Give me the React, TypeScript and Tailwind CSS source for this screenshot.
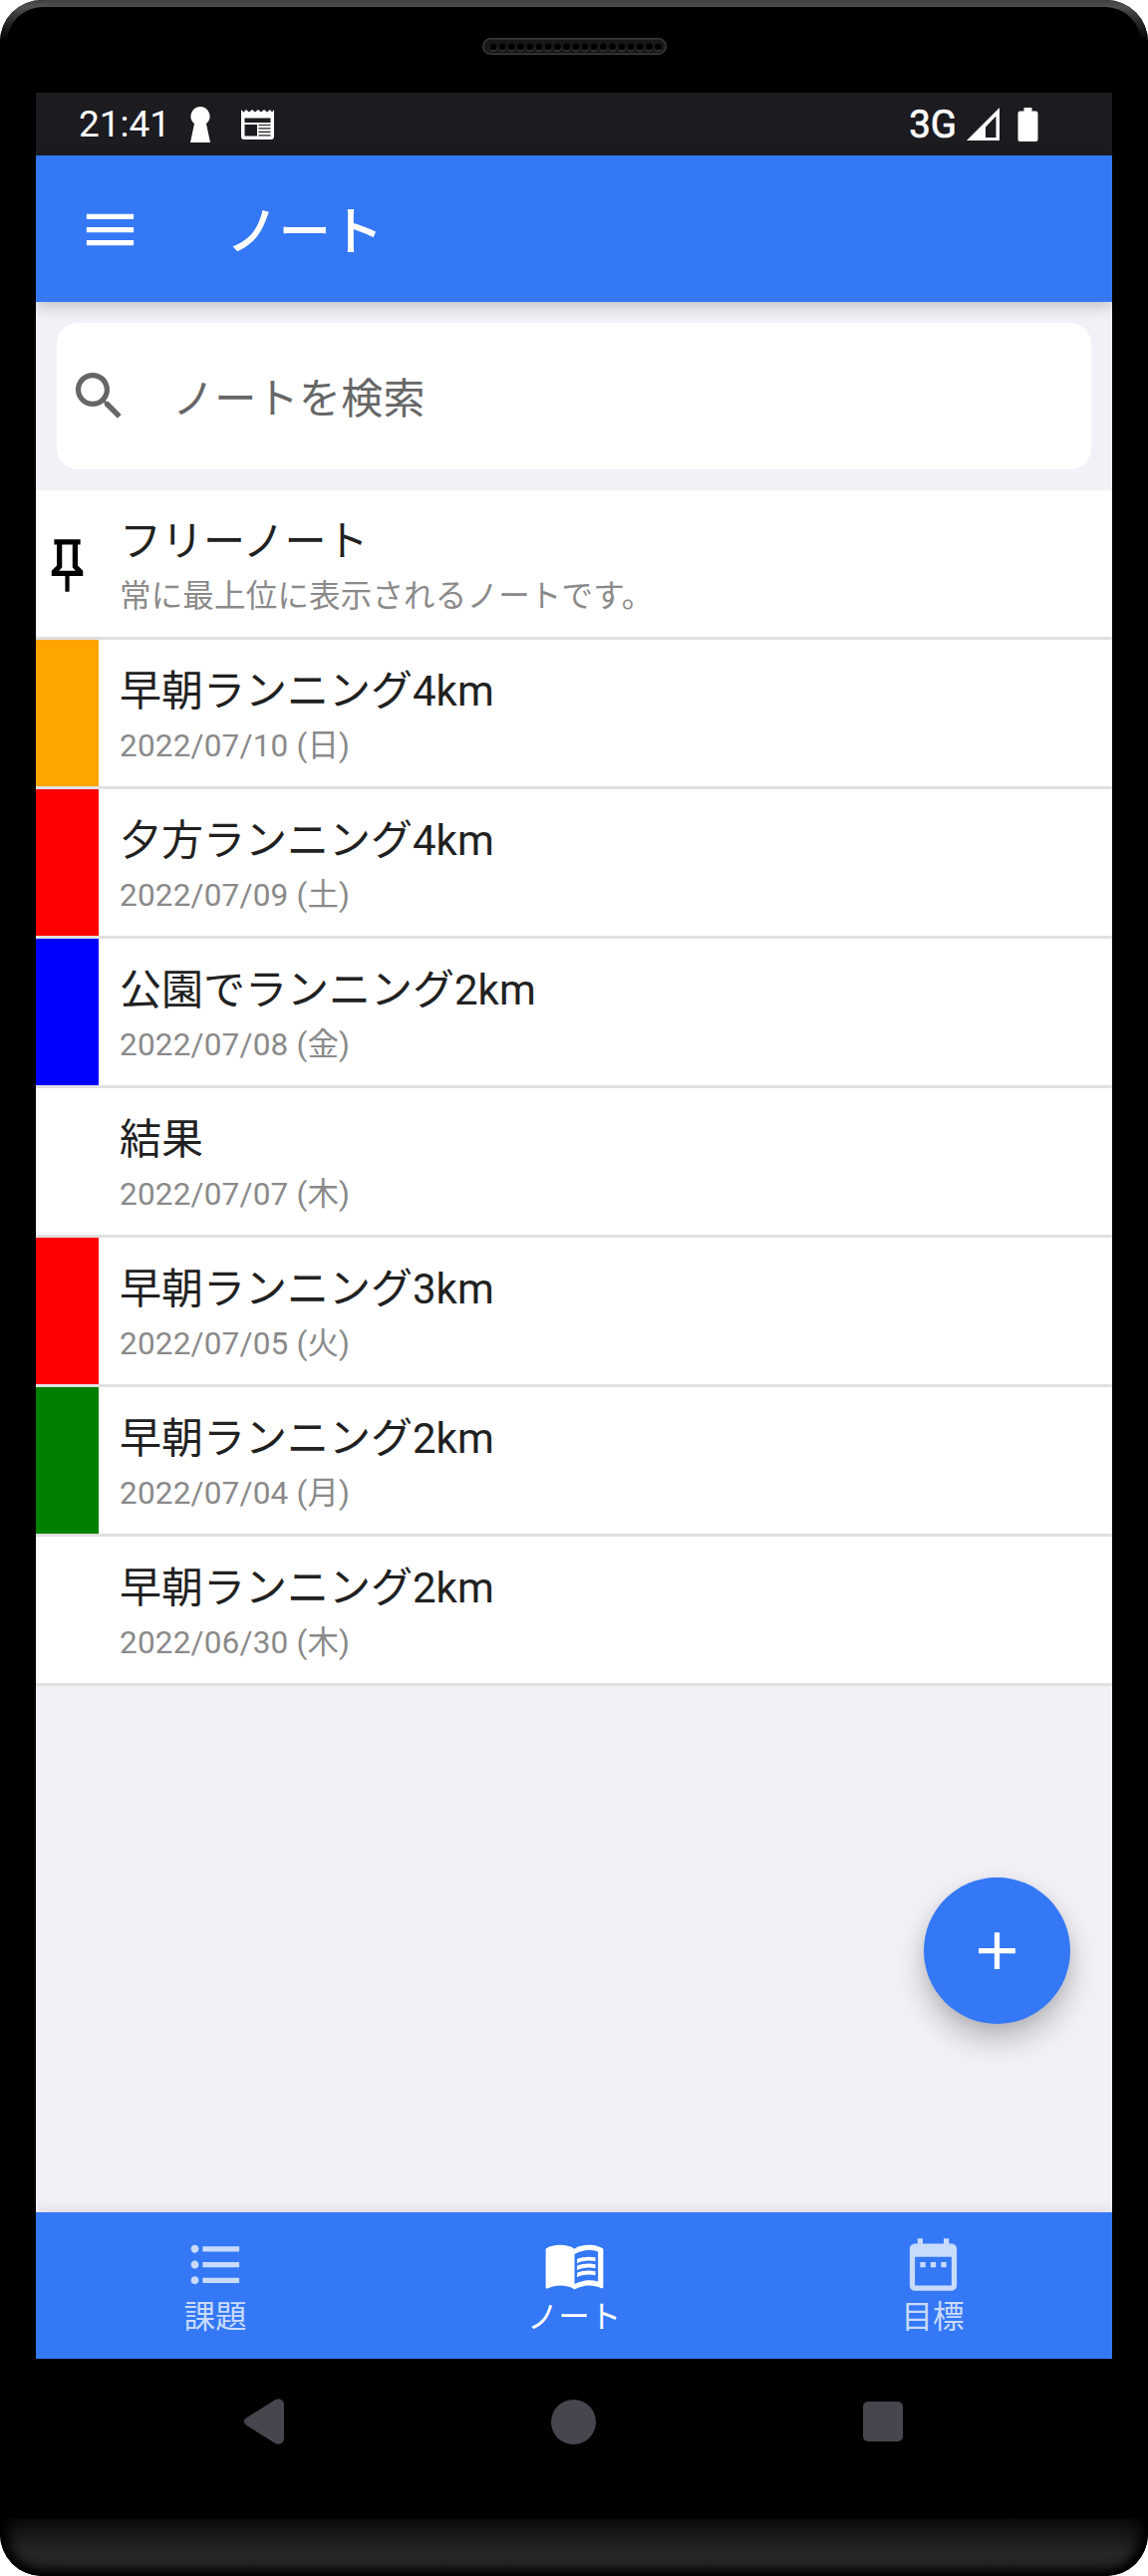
import React from "react";
import { MdMenu, MdSearch, MdAdd, MdMenuBook, MdDateRange, MdFormatListBulleted } from "react-icons/md";

const notes = [
  { title: "早朝ランニング4km", date: "2022/07/10 (日)", color: "bg-[#ffa500]" },
  { title: "夕方ランニング4km", date: "2022/07/09 (土)", color: "bg-[#ff0000]" },
  { title: "公園でランニング2km", date: "2022/07/08 (金)", color: "bg-[#0000ff]" },
  { title: "結果", date: "2022/07/07 (木)", color: "bg-white" },
  { title: "早朝ランニング3km", date: "2022/07/05 (火)", color: "bg-[#ff0000]" },
  { title: "早朝ランニング2km", date: "2022/07/04 (月)", color: "bg-[#008000]" },
  { title: "早朝ランニング2km", date: "2022/06/30 (木)", color: "bg-white" },
];

function Row({ title, sub, children }: { title: string; sub: string; children: React.ReactNode }) {
  return (
    <li className="flex h-[150px] border-b-[3px] border-[#e0e0e0] bg-white">
      <div className="flex w-[63px] shrink-0">{children}</div>
      <div className="ml-[21px] flex flex-col pt-[22px]">
        <span className="h-[61px] text-[42px] leading-[60px] text-[#212121]">{title}</span>
        <span className="h-[48px] text-[31.5px] leading-[48px] tracking-[0.18px] text-[#8a8a8a]">{sub}</span>
      </div>
    </li>
  );
}

function PinIcon() {
  return (
    <svg viewBox="0 0 24 24" className="size-[63px]">
      <path d="M16,12V4H17V2H7V4H8V12L6,14V16H11.2V22H12.8V16H18V14L16,12M8.8,14L10,12.8V4H14V12.8L15.2,14H8.8Z" />
    </svg>
  );
}

function Speaker() {
  return (
    <svg viewBox="0 0 185 17" className="h-[17px] w-[185px]">
      <rect x="0.8" y="0.8" width="183.4" height="15.4" rx="7.7" fill="#181818" stroke="#3a3a3a" strokeWidth="1.6" />
      {Array.from({ length: 19 }, (_, i) => (
        <g key={i}>
          <circle cx={11 + i * 9.2} cy="9.8" r="3.7" fill="#4a4a4a" />
          <circle cx={11 + i * 9.2} cy="9" r="3.6" fill="#000" />
        </g>
      ))}
    </svg>
  );
}

function StatusBar() {
  return (
    <div className="flex h-[63px] items-center justify-between bg-[#1b1b20] pr-[74px] pl-[43px] text-white">
      <div className="flex items-center">
        <span className="w-[98px] text-[37px] leading-[63px]">21:41</span>
        <svg viewBox="0 0 20 36" className="ml-[14px] h-[36px] w-[20px]" fill="currentColor">
          <path d="M10 0a9.6 9.6 0 0 1 6 17l4 19H0l4-19A9.6 9.6 0 0 1 10 0z" />
        </svg>
        <svg viewBox="0 0 33 30" className="ml-[31px] h-[30px] w-[33px]" fill="currentColor">
          <path fillRule="evenodd" d="M0 0L2.500 2.500L5 0L8 2.500L11 0L14 2.500L17 0L20 2.500L23 0L26 2.500L29 0L31 2.500L33 0V27Q33 30 30 30H3Q0 30 0 27zM3.500 8.500V13H29.500V8.500zM3.500 15V26.500H16V15zM17.500 15V16H29.500V15zM17.500 18.300V19.500H29.500V18.300zM17.500 21.800V23H29.500V21.800zM17.500 25.300V26.500H29.500V25.300z" />
        </svg>
      </div>
      <div className="flex items-center">
        <span className="text-[38.5px] leading-[63px] [-webkit-text-stroke:0.7px_white]">3G</span>
        <svg viewBox="0 0 33 34" className="ml-[10px] h-[34px] w-[33px]" fill="currentColor">
          <path fillRule="evenodd" d="M33 0v33H0zM29.500 8.500L19 19.500V30H29.500z" />
        </svg>
        <svg viewBox="0 0 20 34" className="ml-[18px] h-[34px] w-[21px]" fill="currentColor">
          <path d="M6 0h8v3.500h4q2 0 2 2V32q0 2-2 2H2q-2 0-2-2V5.500q0-2 2-2h4z" />
        </svg>
      </div>
    </div>
  );
}

function Tab({ icon, label, active }: { icon: React.ReactNode; label: string; active?: boolean }) {
  return (
    <div className={active ? "flex flex-1 flex-col items-center pt-[21px] text-white" : "flex flex-1 flex-col items-center pt-[21px] text-[#c9dbfd]"}>
      {icon}
      <span className="pt-[2px] text-[31.5px] leading-[40px]">{label}</span>
    </div>
  );
}

export default function App() {
  return (
    <div lang="ja" className="h-[2585px] w-[1152px] bg-white font-[Roboto,'Noto_Sans_CJK_JP',sans-serif]">
      <div className="flex h-full flex-col overflow-hidden rounded-[42px] bg-black">
        <div className="flex h-[93px] shrink-0 flex-col bg-[linear-gradient(to_bottom,#404040_0px,#505050_7px,#3c3c3c_14px,#000_40px)] px-[7px] pt-[7px]">
          <div className="flex flex-1 justify-center rounded-t-[36px] bg-black pt-[31px]">
            <Speaker />
          </div>
        </div>

        <div className="relative mx-[36px] flex h-[2274px] shrink-0 flex-col overflow-hidden bg-[#f2f1f7]">
          <StatusBar />
          <header className="z-10 flex h-[147px] shrink-0 items-center bg-[#3478f6] pl-[43px] text-white shadow-[0_4px_14px_rgba(0,0,0,0.22)]">
            <MdMenu className="mt-[1px] size-[63px]" />
            <h1 className="ml-[85px] pt-[7px] text-[52.5px] leading-[72px] font-medium">ノート</h1>
          </header>

          <div className="m-[21px] flex h-[147px] shrink-0 items-center rounded-[21px] bg-white pl-[11px] text-[#666]">
            <MdSearch className="size-[63px]" />
            <span className="ml-[42px] pt-[6px] text-[42px] leading-[60px] tracking-[0.3px]">ノートを検索</span>
          </div>

          <ul>
            <Row title="フリーノート" sub="常に最上位に表示されるノートです。">
              <div className="flex items-center pt-[4px]">
                <PinIcon />
              </div>
            </Row>
            {notes.map((n) => (
              <Row key={n.date} title={n.title} sub={n.date}>
                <div className={`flex-1 ${n.color}`} />
              </Row>
            ))}
          </ul>

          <button aria-label="追加" className="absolute right-[42px] bottom-[336px] flex size-[147px] items-center justify-center rounded-full bg-[#3478f6] text-white shadow-[0_16px_30px_rgba(0,0,0,0.24),0_3px_14px_rgba(0,0,0,0.06)]">
            <MdAdd className="size-[63px]" />
          </button>

          <nav className="mt-auto flex h-[147px] shrink-0 bg-[#3478f6] shadow-[0_0_14px_rgba(0,0,0,0.14)]">
            <Tab icon={<MdFormatListBulleted className="size-[63px]" />} label="課題" />
            <Tab icon={<MdMenuBook className="size-[63px]" />} label="ノート" active />
            <Tab icon={<MdDateRange className="size-[63px]" />} label="目標" />
          </nav>
        </div>

        <div className="flex h-[126px] shrink-0 items-center justify-between pr-[246px] pl-[244px]">
          <svg viewBox="0 0 41 46" className="h-[46px] w-[41px]" fill="#47464f">
            <path d="M3 19.500L32 1.200Q36-1 39.500 2Q41 3.500 41 6V40Q41 42.500 39.500 44Q36 47 32 44.800L3 26.500Q-1.500 23 3 19.500z" />
          </svg>
          <div className="size-[45px] rounded-full bg-[#47464f]" />
          <div className="size-[40px] rounded-[5px] bg-[#47464f]" />
        </div>

        <div className="mt-auto h-[58px] shrink-0 rounded-b-[42px] bg-linear-to-b from-[#0b0b0b] via-[#262626] via-60% to-[#222] shadow-[inset_0_-8px_10px_-2px_#000,inset_14px_0_14px_-6px_#000,inset_-14px_0_14px_-6px_#000]" />
      </div>
    </div>
  );
}
